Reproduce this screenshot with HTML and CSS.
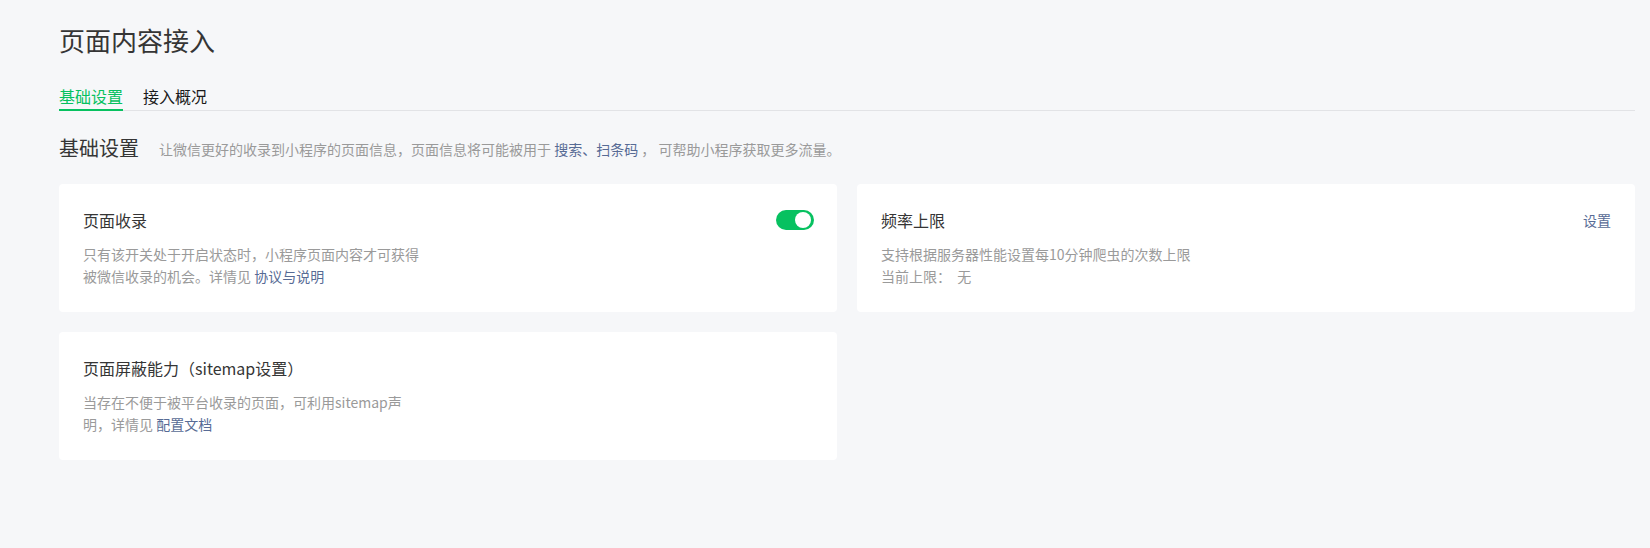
FILE: index.html
```html
<!DOCTYPE html>
<html lang="zh-CN">
<head>
<meta charset="utf-8">
<title>页面内容接入</title>
<link rel="stylesheet" href="styles.css">
</head>
<body>
<div class="page">
  <h1 class="page-title">页面内容接入</h1>
  <nav class="tabs">
    <a class="tab tab-active">基础设置</a>
    <a class="tab">接入概况</a>
  </nav>
  <div class="section-head">
    <h2 class="section-title">基础设置</h2>
    <p class="section-desc">让微信更好的收录到小程序的页面信息，页面信息将可能被用于 <a class="link">搜索、扫条码</a> ， 可帮助小程序获取更多流量。</p>
  </div>
  <div class="cards">
    <div class="card">
      <div class="card-head">
        <h3 class="card-title">页面收录</h3>
        <span class="switch"><span class="switch-knob"></span></span>
      </div>
      <p class="card-desc">只有该开关处于开启状态时，小程序页面内容才可获得<br>被微信收录的机会。详情见 <a class="link">协议与说明</a></p>
    </div>
    <div class="card">
      <div class="card-head">
        <h3 class="card-title">频率上限</h3>
        <a class="link card-action">设置</a>
      </div>
      <p class="card-desc">支持根据服务器性能设置每10分钟爬虫的次数上限<br>当前上限：&nbsp; 无</p>
    </div>
    <div class="card">
      <div class="card-head">
        <h3 class="card-title">页面屏蔽能力（sitemap设置）</h3>
      </div>
      <p class="card-desc">当存在不便于被平台收录的页面，可利用sitemap声<br>明，详情见 <a class="link">配置文档</a></p>
    </div>
  </div>
</div>
</body>
</html>
```
FILE: styles.css
```css
* {
  box-sizing: border-box;
}

html, body {
  margin: 0;
  padding: 0;
  background: #f6f7f9;
}

body {
  font-family: "Noto Sans CJK SC", "Noto Sans", "Liberation Sans", sans-serif;
  color: #353535;
  font-size: 14px;
}

.page {
  padding: 22px 15px 40px 59px;
}

.page-title {
  margin: 0;
  font-size: 26px;
  line-height: 36px;
  font-weight: 400;
  color: #353535;
}

.tabs {
  display: flex;
  gap: 20px;
  margin-top: 26px;
  border-bottom: 1px solid #e2e3e6;
}

.tab {
  font-size: 16px;
  line-height: 24px;
  padding-bottom: 1px;
  border-bottom: 2px solid transparent;
  margin-bottom: -1px;
  color: #1a1a1a;
  cursor: pointer;
}

.tab-active {
  color: #07c160;
  border-bottom-color: #07c160;
}

.section-head {
  display: flex;
  align-items: center;
  gap: 20px;
  margin-top: 23px;
  margin-bottom: 22px;
  height: 28px;
}

.section-title {
  margin: 0;
  font-size: 20px;
  line-height: 28px;
  font-weight: 400;
  color: #353535;
}

.section-desc {
  margin: 0;
  font-size: 14px;
  line-height: 22px;
  color: #9a9a9a;
  padding-top: 2px;
}

.link {
  color: #576b95;
  text-decoration: none;
  cursor: pointer;
}

.cards {
  display: grid;
  grid-template-columns: 1fr 1fr;
  gap: 20px;
}

.card {
  background: #fff;
  border-radius: 4px;
  padding: 24px 24px 25px;
  height: 128px;
}

.card-head {
  display: flex;
  align-items: center;
  justify-content: space-between;
  height: 24px;
  margin-bottom: 11px;
}

.card-title {
  margin: 0;
  font-size: 16px;
  line-height: 24px;
  font-weight: 400;
  color: #353535;
}

.card-action {
  font-size: 14px;
  line-height: 22px;
}

.card-desc {
  margin: 0;
  font-size: 14px;
  line-height: 22px;
  color: #9a9a9a;
}

.switch {
  display: flex;
  align-items: center;
  justify-content: flex-end;
  width: 38px;
  height: 20px;
  padding: 0 3px;
  border-radius: 10px;
  background: #07c160;
  margin-right: -1px;
}

.switch-knob {
  width: 16px;
  height: 16px;
  border-radius: 50%;
  background: #fff;
}
```
